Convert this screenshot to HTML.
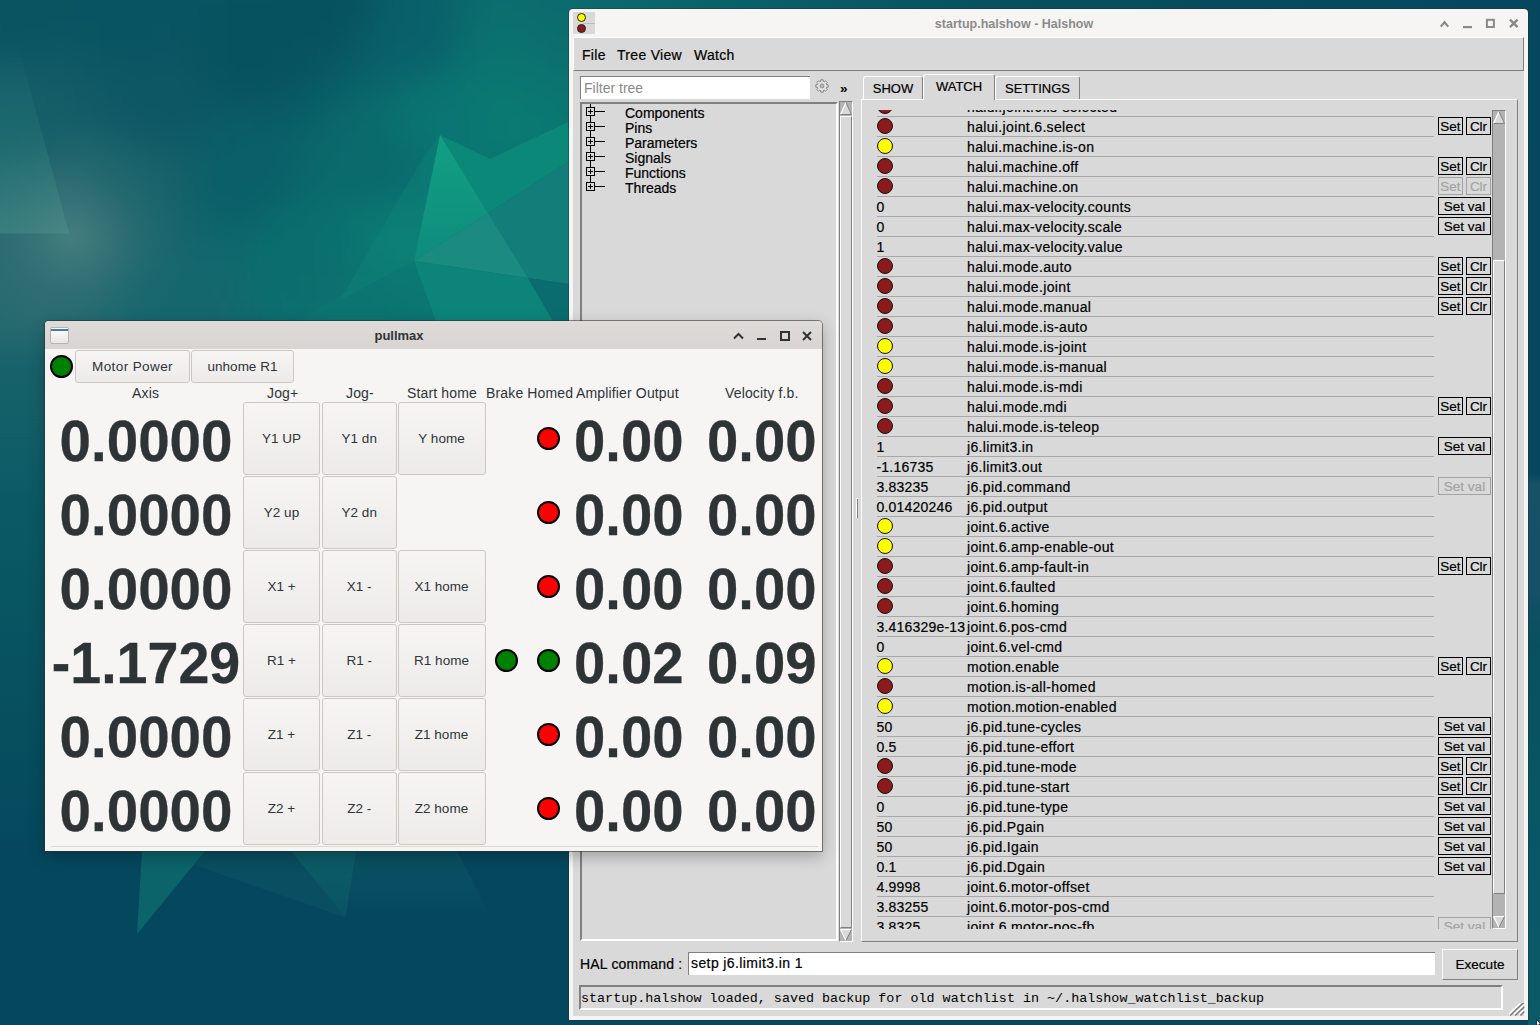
<!DOCTYPE html>
<html><head><meta charset="utf-8">
<style>
*{margin:0;padding:0;box-sizing:border-box}
html,body{width:1540px;height:1025px;overflow:hidden}
body{position:relative;font-family:"Liberation Sans",sans-serif;background:#075463}
.abs{position:absolute}
#bg{position:absolute;left:0;top:0}
/* ---------- halshow ---------- */
#hs{position:absolute;left:569px;top:9px;width:959px;height:1011px;background:#f6f5f4;border-radius:4px 4px 0 0;box-shadow:0 0 0 1px rgba(40,40,40,0.35)}
#hs .title{position:absolute;left:0;top:7.5px;width:890px;text-align:center;font-weight:bold;font-size:12.5px;color:#8b8b8b;padding-left:0}
#hs .ic{position:absolute;left:4px;top:3px;width:22px;height:22px;background:#d9d9d9}
#hs .ic i{position:absolute;left:3.5px;width:9px;height:9px;border-radius:50%;border:1px solid #222}
#hscont{position:absolute;left:4px;top:28px;width:951px;height:979px;background:#d9d9d9}
.menu{position:absolute;top:9px;font-size:14px;letter-spacing:0.3px;color:#000;-webkit-text-stroke:0.2px #000}
#menubar{position:absolute;left:0;top:0;width:951px;height:34px;border-top:1px solid #fff;border-left:1px solid #fff;border-bottom:1px solid #7f7f7f;border-right:1px solid #7f7f7f}
#filter{position:absolute;left:7px;top:39px;width:230px;height:23px;background:#fff;border-top:1px solid #7f7f7f;border-left:1px solid #7f7f7f;font-size:14px;color:#8a8a8a;padding:3px 0 0 3px}
#tree{position:absolute;left:7px;top:65px;width:258px;height:839px;border-top:2px solid #808080;border-left:2px solid #808080;border-bottom:2px solid #fff;border-right:2px solid #fff}
.ti{position:absolute;left:43px;font-size:14px;color:#000;white-space:nowrap;-webkit-text-stroke:0.2px #000}
#tsb{position:absolute;left:266px;top:64px;width:14px;height:841px;background:#b3b3b3;border-left:1px solid #808080;border-top:1px solid #808080;border-right:1px solid #fff;border-bottom:1px solid #fff}
.thumb{position:absolute;left:0;width:12px;background:#d9d9d9;border-left:1px solid #fff;border-top:1px solid #fff;border-right:1px solid #808080;border-bottom:1px solid #808080}
.tab{position:absolute;-webkit-text-stroke:0.2px #000;height:24px;border:1px solid #fff;border-right-color:#808080;border-bottom:none;border-radius:3px 3px 0 0;font-size:13px;color:#000;text-align:center;background:#d9d9d9}
#wf{position:absolute;left:288px;top:62px;width:657px;height:843px;border-top:1px solid #fff;border-left:1px solid #fff;border-right:1px solid #808080;border-bottom:1px solid #808080}
#canvas{position:absolute;left:862px;top:110px;width:630px;height:819px;overflow:hidden}
.sep{position:absolute;left:15px;width:557px;height:1px;background:#a8a8a8}
.led{position:absolute;left:15px;width:16px;height:16px;border-radius:50%;border:1px solid #111}
.led.r{background:#8b1a1a}
.led.y{background:#ffff00}
.val{position:absolute;left:14.5px;font-size:14px;letter-spacing:0.2px;-webkit-text-stroke:0.2px #000;line-height:20px;color:#000;white-space:nowrap}
.nm{position:absolute;left:105px;font-size:14px;letter-spacing:0.35px;-webkit-text-stroke:0.2px #000;line-height:20px;color:#000;white-space:nowrap}
.tb{position:absolute;-webkit-text-stroke:0.2px currentColor;height:18px;border:1px solid #000;font-size:13.5px;line-height:18px;text-align:center;color:#000;background:#d9d9d9;white-space:nowrap}
.tb.dis{border-color:#a3a3a3;color:#a3a3a3}
#wsb{position:absolute;left:1492px;top:110px;width:14px;height:819px;background:#b3b3b3;border-left:1px solid #808080;border-top:1px solid #808080;border-right:1px solid #fff;border-bottom:1px solid #fff}
/* ---------- pullmax ---------- */
#pm{position:absolute;left:45px;top:321px;width:777px;height:530px;background:#f6f5f4;border-radius:4px 4px 0 0;box-shadow:0 0 0 1px rgba(50,45,40,0.55),0 5px 16px rgba(0,0,0,0.28)}
#pm .tbar{position:absolute;left:0;top:0;width:777px;height:28px;background:linear-gradient(#dfdbd8,#d8d4d1);border-radius:4px 4px 0 0}
#pm .title{position:absolute;left:0;top:7px;width:708px;text-align:center;font-weight:bold;font-size:13px;color:#2e3436}
.pb{position:absolute;border:1px solid #cdc7c2;border-radius:3px;background:linear-gradient(#f6f5f4,#edebe9);font-size:13.5px;color:#2e3436;display:flex;align-items:center;justify-content:center;white-space:nowrap}
.hdr{position:absolute;top:63.5px;font-size:14px;letter-spacing:0.15px;color:#2e3436;white-space:nowrap}
.big{position:absolute;font-weight:bold;font-size:58px;line-height:66px;color:#2e3436;white-space:nowrap;-webkit-text-stroke:0.3px #2e3436}
.ax{left:0.5px;width:200px;text-align:center;transform:scaleX(0.975);transform-origin:100px 0}
.amp{left:529px;transform:scaleX(0.97);transform-origin:0 0}
.vel{left:662px;transform:scaleX(0.97);transform-origin:0 0}
.pled{position:absolute;width:23px;height:23px;border-radius:50%;border:2px solid #000}
.pled.red{background:#ff0000}
.pled.green{background:#008000}
</style></head><body>
<svg id="bg" width="1540" height="1025" viewBox="0 0 1540 1025">
  <defs>
    <filter id="blur" x="-10%" y="-10%" width="120%" height="120%" color-interpolation-filters="sRGB"><feGaussianBlur stdDeviation="16"/></filter>
    <linearGradient id="lstrip" x1="0" y1="321" x2="0" y2="851" gradientUnits="userSpaceOnUse">
      <stop offset="0" stop-color="#1f666e"/>
      <stop offset="0.34" stop-color="#0a5a65"/>
      <stop offset="0.72" stop-color="#07505f"/>
      <stop offset="1" stop-color="#05485e"/>
    </linearGradient>
    <radialGradient id="spot" cx="71" cy="238" r="120" gradientUnits="userSpaceOnUse">
      <stop offset="0" stop-color="#5a8e8c" stop-opacity="0.5"/>
      <stop offset="0.5" stop-color="#3f7a7c" stop-opacity="0.25"/>
      <stop offset="1" stop-color="#2a6a70" stop-opacity="0"/>
    </radialGradient>
    <linearGradient id="topstrip" x1="569" y1="0" x2="1540" y2="0" gradientUnits="userSpaceOnUse">
      <stop offset="0" stop-color="#0c6b6e"/>
      <stop offset="0.45" stop-color="#07505f"/>
      <stop offset="1" stop-color="#06465d"/>
    </linearGradient>
    <linearGradient id="rstrip" x1="0" y1="0" x2="0" y2="1025" gradientUnits="userSpaceOnUse">
      <stop offset="0" stop-color="#06475d"/>
      <stop offset="0.462" stop-color="#07475e"/>
      <stop offset="0.472" stop-color="#165266"/>
      <stop offset="0.58" stop-color="#145066"/>
      <stop offset="0.63" stop-color="#08505f"/>
      <stop offset="0.82" stop-color="#095766"/>
      <stop offset="1" stop-color="#0b5a68"/>
    </linearGradient>
    <linearGradient id="lefttri" x1="0" y1="40" x2="0" y2="234" gradientUnits="userSpaceOnUse">
      <stop offset="0" stop-color="#2a8080" stop-opacity="0"/>
      <stop offset="0.5" stop-color="#2f8480" stop-opacity="0.3"/>
      <stop offset="1" stop-color="#44908a" stop-opacity="0.6"/>
    </linearGradient>
    <linearGradient id="brightg" x1="0" y1="135" x2="0" y2="261" gradientUnits="userSpaceOnUse">
      <stop offset="0" stop-color="#12a085"/>
      <stop offset="1" stop-color="#0e8c7c"/>
    </linearGradient>
    <linearGradient id="rfade" x1="0" y1="851" x2="0" y2="917" gradientUnits="userSpaceOnUse">
      <stop offset="0" stop-color="#0a5262"/>
      <stop offset="1" stop-color="#05485e"/>
    </linearGradient>
    <linearGradient id="t3g" x1="0" y1="851" x2="0" y2="917" gradientUnits="userSpaceOnUse">
      <stop offset="0" stop-color="#0b5e68"/>
      <stop offset="1" stop-color="#0a5363"/>
    </linearGradient>
  </defs>
  <rect width="1540" height="1025" fill="#05485e"/>
  <rect x="0" y="300" width="80" height="551" fill="url(#lstrip)"/>
  <g filter="url(#blur)"><rect x="-50" y="-50" width="26" height="26" fill="#0b5563"/><rect x="-25" y="-50" width="26" height="26" fill="#0b5562"/><rect x="0" y="-50" width="26" height="26" fill="#0a5462"/><rect x="25" y="-50" width="26" height="26" fill="#0a5462"/><rect x="50" y="-50" width="26" height="26" fill="#0a5562"/><rect x="75" y="-50" width="26" height="26" fill="#0a5462"/><rect x="100" y="-50" width="26" height="26" fill="#095462"/><rect x="125" y="-50" width="26" height="26" fill="#095462"/><rect x="150" y="-50" width="26" height="26" fill="#095562"/><rect x="175" y="-50" width="26" height="26" fill="#095562"/><rect x="200" y="-50" width="26" height="26" fill="#095561"/><rect x="225" y="-50" width="26" height="26" fill="#085461"/><rect x="250" y="-50" width="26" height="26" fill="#085460"/><rect x="275" y="-50" width="26" height="26" fill="#075360"/><rect x="300" y="-50" width="26" height="26" fill="#075360"/><rect x="325" y="-50" width="26" height="26" fill="#075360"/><rect x="350" y="-50" width="26" height="26" fill="#085661"/><rect x="375" y="-50" width="26" height="26" fill="#085b65"/><rect x="400" y="-50" width="26" height="26" fill="#095f68"/><rect x="425" y="-50" width="26" height="26" fill="#09626a"/><rect x="450" y="-50" width="26" height="26" fill="#0a676c"/><rect x="475" y="-50" width="26" height="26" fill="#0b6b6d"/><rect x="500" y="-50" width="26" height="26" fill="#0c6c6e"/><rect x="525" y="-50" width="26" height="26" fill="#0c6c6e"/><rect x="550" y="-50" width="26" height="26" fill="#0c6b6e"/><rect x="575" y="-50" width="26" height="26" fill="#0c6b6e"/><rect x="600" y="-50" width="26" height="26" fill="#0c6c6e"/><rect x="-50" y="-25" width="26" height="26" fill="#0b5562"/><rect x="-25" y="-25" width="26" height="26" fill="#0a5462"/><rect x="0" y="-25" width="26" height="26" fill="#0a5462"/><rect x="25" y="-25" width="26" height="26" fill="#0a5462"/><rect x="50" y="-25" width="26" height="26" fill="#0a5462"/><rect x="75" y="-25" width="26" height="26" fill="#095462"/><rect x="100" y="-25" width="26" height="26" fill="#095462"/><rect x="125" y="-25" width="26" height="26" fill="#095462"/><rect x="150" y="-25" width="26" height="26" fill="#095462"/><rect x="175" y="-25" width="26" height="26" fill="#095562"/><rect x="200" y="-25" width="26" height="26" fill="#085461"/><rect x="225" y="-25" width="26" height="26" fill="#085360"/><rect x="250" y="-25" width="26" height="26" fill="#075360"/><rect x="275" y="-25" width="26" height="26" fill="#07535f"/><rect x="300" y="-25" width="26" height="26" fill="#07525f"/><rect x="325" y="-25" width="26" height="26" fill="#07525f"/><rect x="350" y="-25" width="26" height="26" fill="#075461"/><rect x="375" y="-25" width="26" height="26" fill="#085c67"/><rect x="400" y="-25" width="26" height="26" fill="#096069"/><rect x="425" y="-25" width="26" height="26" fill="#09626a"/><rect x="450" y="-25" width="26" height="26" fill="#0a676c"/><rect x="475" y="-25" width="26" height="26" fill="#0b6c6e"/><rect x="500" y="-25" width="26" height="26" fill="#0c6c6e"/><rect x="525" y="-25" width="26" height="26" fill="#0c6b6e"/><rect x="550" y="-25" width="26" height="26" fill="#0c6b6e"/><rect x="575" y="-25" width="26" height="26" fill="#0c6b6e"/><rect x="600" y="-25" width="26" height="26" fill="#0c6c6e"/><rect x="-50" y="0" width="26" height="26" fill="#0b5562"/><rect x="-25" y="0" width="26" height="26" fill="#0a5462"/><rect x="0" y="0" width="26" height="26" fill="#0a5462"/><rect x="25" y="0" width="26" height="26" fill="#0a5462"/><rect x="50" y="0" width="26" height="26" fill="#0a5462"/><rect x="75" y="0" width="26" height="26" fill="#095462"/><rect x="100" y="0" width="26" height="26" fill="#095462"/><rect x="125" y="0" width="26" height="26" fill="#095462"/><rect x="150" y="0" width="26" height="26" fill="#095462"/><rect x="175" y="0" width="26" height="26" fill="#095462"/><rect x="200" y="0" width="26" height="26" fill="#085360"/><rect x="225" y="0" width="26" height="26" fill="#07525f"/><rect x="250" y="0" width="26" height="26" fill="#07525f"/><rect x="275" y="0" width="26" height="26" fill="#07525f"/><rect x="300" y="0" width="26" height="26" fill="#07525f"/><rect x="325" y="0" width="26" height="26" fill="#07525f"/><rect x="350" y="0" width="26" height="26" fill="#075561"/><rect x="375" y="0" width="26" height="26" fill="#095f69"/><rect x="400" y="0" width="26" height="26" fill="#09606a"/><rect x="425" y="0" width="26" height="26" fill="#09616a"/><rect x="450" y="0" width="26" height="26" fill="#0a686c"/><rect x="475" y="0" width="26" height="26" fill="#0b6f6f"/><rect x="500" y="0" width="26" height="26" fill="#0b6e6f"/><rect x="525" y="0" width="26" height="26" fill="#0c6b6e"/><rect x="550" y="0" width="26" height="26" fill="#0c6b6e"/><rect x="575" y="0" width="26" height="26" fill="#0c6b6e"/><rect x="600" y="0" width="26" height="26" fill="#0c6c6e"/><rect x="-50" y="25" width="26" height="26" fill="#0c5663"/><rect x="-25" y="25" width="26" height="26" fill="#0b5462"/><rect x="0" y="25" width="26" height="26" fill="#0a5462"/><rect x="25" y="25" width="26" height="26" fill="#0a5462"/><rect x="50" y="25" width="26" height="26" fill="#0b5563"/><rect x="75" y="25" width="26" height="26" fill="#0a5562"/><rect x="100" y="25" width="26" height="26" fill="#095462"/><rect x="125" y="25" width="26" height="26" fill="#095462"/><rect x="150" y="25" width="26" height="26" fill="#0a5563"/><rect x="175" y="25" width="26" height="26" fill="#0a5462"/><rect x="200" y="25" width="26" height="26" fill="#07535f"/><rect x="225" y="25" width="26" height="26" fill="#07525f"/><rect x="250" y="25" width="26" height="26" fill="#07525f"/><rect x="275" y="25" width="26" height="26" fill="#07525f"/><rect x="300" y="25" width="26" height="26" fill="#07525f"/><rect x="325" y="25" width="26" height="26" fill="#07535f"/><rect x="350" y="25" width="26" height="26" fill="#085a65"/><rect x="375" y="25" width="26" height="26" fill="#09606a"/><rect x="400" y="25" width="26" height="26" fill="#09606a"/><rect x="425" y="25" width="26" height="26" fill="#09616a"/><rect x="450" y="25" width="26" height="26" fill="#0a6a6d"/><rect x="475" y="25" width="26" height="26" fill="#0b7170"/><rect x="500" y="25" width="26" height="26" fill="#0b7270"/><rect x="525" y="25" width="26" height="26" fill="#0b706f"/><rect x="550" y="25" width="26" height="26" fill="#0c6c6e"/><rect x="575" y="25" width="26" height="26" fill="#0c6c6e"/><rect x="600" y="25" width="26" height="26" fill="#0c6c6e"/><rect x="-50" y="50" width="26" height="26" fill="#0f5865"/><rect x="-25" y="50" width="26" height="26" fill="#0e5864"/><rect x="0" y="50" width="26" height="26" fill="#0e5864"/><rect x="25" y="50" width="26" height="26" fill="#0f5865"/><rect x="50" y="50" width="26" height="26" fill="#0f5865"/><rect x="75" y="50" width="26" height="26" fill="#0d5764"/><rect x="100" y="50" width="26" height="26" fill="#0c5663"/><rect x="125" y="50" width="26" height="26" fill="#0c5664"/><rect x="150" y="50" width="26" height="26" fill="#0d5664"/><rect x="175" y="50" width="26" height="26" fill="#0b5563"/><rect x="200" y="50" width="26" height="26" fill="#085360"/><rect x="225" y="50" width="26" height="26" fill="#07525f"/><rect x="250" y="50" width="26" height="26" fill="#07525f"/><rect x="275" y="50" width="26" height="26" fill="#07535f"/><rect x="300" y="50" width="26" height="26" fill="#075561"/><rect x="325" y="50" width="26" height="26" fill="#085762"/><rect x="350" y="50" width="26" height="26" fill="#095e67"/><rect x="375" y="50" width="26" height="26" fill="#09606a"/><rect x="400" y="50" width="26" height="26" fill="#09616a"/><rect x="425" y="50" width="26" height="26" fill="#09666c"/><rect x="450" y="50" width="26" height="26" fill="#0a706f"/><rect x="475" y="50" width="26" height="26" fill="#0b7370"/><rect x="500" y="50" width="26" height="26" fill="#0b7270"/><rect x="525" y="50" width="26" height="26" fill="#0b7270"/><rect x="550" y="50" width="26" height="26" fill="#0b7170"/><rect x="575" y="50" width="26" height="26" fill="#0b6f6f"/><rect x="600" y="50" width="26" height="26" fill="#0b6e6f"/><rect x="-50" y="75" width="26" height="26" fill="#135c67"/><rect x="-25" y="75" width="26" height="26" fill="#145d67"/><rect x="0" y="75" width="26" height="26" fill="#155e68"/><rect x="25" y="75" width="26" height="26" fill="#155e68"/><rect x="50" y="75" width="26" height="26" fill="#145d67"/><rect x="75" y="75" width="26" height="26" fill="#105a66"/><rect x="100" y="75" width="26" height="26" fill="#0e5764"/><rect x="125" y="75" width="26" height="26" fill="#0d5664"/><rect x="150" y="75" width="26" height="26" fill="#0d5664"/><rect x="175" y="75" width="26" height="26" fill="#0d5664"/><rect x="200" y="75" width="26" height="26" fill="#0a5562"/><rect x="225" y="75" width="26" height="26" fill="#085360"/><rect x="250" y="75" width="26" height="26" fill="#075360"/><rect x="275" y="75" width="26" height="26" fill="#085561"/><rect x="300" y="75" width="26" height="26" fill="#085963"/><rect x="325" y="75" width="26" height="26" fill="#095e66"/><rect x="350" y="75" width="26" height="26" fill="#09636a"/><rect x="375" y="75" width="26" height="26" fill="#09686c"/><rect x="400" y="75" width="26" height="26" fill="#0a6e6f"/><rect x="425" y="75" width="26" height="26" fill="#0a7371"/><rect x="450" y="75" width="26" height="26" fill="#0a7571"/><rect x="475" y="75" width="26" height="26" fill="#0a7871"/><rect x="500" y="75" width="26" height="26" fill="#0a7871"/><rect x="525" y="75" width="26" height="26" fill="#0b7571"/><rect x="550" y="75" width="26" height="26" fill="#0b7470"/><rect x="575" y="75" width="26" height="26" fill="#0b7270"/><rect x="600" y="75" width="26" height="26" fill="#0b7170"/><rect x="-50" y="100" width="26" height="26" fill="#145d68"/><rect x="-25" y="100" width="26" height="26" fill="#155e68"/><rect x="0" y="100" width="26" height="26" fill="#155e68"/><rect x="25" y="100" width="26" height="26" fill="#155e68"/><rect x="50" y="100" width="26" height="26" fill="#155e68"/><rect x="75" y="100" width="26" height="26" fill="#135c67"/><rect x="100" y="100" width="26" height="26" fill="#0f5865"/><rect x="125" y="100" width="26" height="26" fill="#0d5664"/><rect x="150" y="100" width="26" height="26" fill="#0d5664"/><rect x="175" y="100" width="26" height="26" fill="#0d5764"/><rect x="200" y="100" width="26" height="26" fill="#0b5965"/><rect x="225" y="100" width="26" height="26" fill="#0a5964"/><rect x="250" y="100" width="26" height="26" fill="#095a64"/><rect x="275" y="100" width="26" height="26" fill="#095b65"/><rect x="300" y="100" width="26" height="26" fill="#096067"/><rect x="325" y="100" width="26" height="26" fill="#0a666a"/><rect x="350" y="100" width="26" height="26" fill="#0a6a6c"/><rect x="375" y="100" width="26" height="26" fill="#0a6e6f"/><rect x="400" y="100" width="26" height="26" fill="#0a7472"/><rect x="425" y="100" width="26" height="26" fill="#0a7572"/><rect x="450" y="100" width="26" height="26" fill="#0a7572"/><rect x="475" y="100" width="26" height="26" fill="#0a7a72"/><rect x="500" y="100" width="26" height="26" fill="#0a7a72"/><rect x="525" y="100" width="26" height="26" fill="#0a7972"/><rect x="550" y="100" width="26" height="26" fill="#0a7771"/><rect x="575" y="100" width="26" height="26" fill="#0b7471"/><rect x="600" y="100" width="26" height="26" fill="#0b7370"/><rect x="-50" y="125" width="26" height="26" fill="#165e68"/><rect x="-25" y="125" width="26" height="26" fill="#155e68"/><rect x="0" y="125" width="26" height="26" fill="#155e68"/><rect x="25" y="125" width="26" height="26" fill="#155e68"/><rect x="50" y="125" width="26" height="26" fill="#175f69"/><rect x="75" y="125" width="26" height="26" fill="#18606a"/><rect x="100" y="125" width="26" height="26" fill="#175f69"/><rect x="125" y="125" width="26" height="26" fill="#125b67"/><rect x="150" y="125" width="26" height="26" fill="#0f5965"/><rect x="175" y="125" width="26" height="26" fill="#0e5a66"/><rect x="200" y="125" width="26" height="26" fill="#0b5d67"/><rect x="225" y="125" width="26" height="26" fill="#0a5f68"/><rect x="250" y="125" width="26" height="26" fill="#0a5f68"/><rect x="275" y="125" width="26" height="26" fill="#0a6068"/><rect x="300" y="125" width="26" height="26" fill="#0a656a"/><rect x="325" y="125" width="26" height="26" fill="#0a696c"/><rect x="350" y="125" width="26" height="26" fill="#0a6a6c"/><rect x="375" y="125" width="26" height="26" fill="#0a6b6d"/><rect x="400" y="125" width="26" height="26" fill="#0a7371"/><rect x="425" y="125" width="26" height="26" fill="#0a7572"/><rect x="450" y="125" width="26" height="26" fill="#0a7572"/><rect x="475" y="125" width="26" height="26" fill="#0a7972"/><rect x="500" y="125" width="26" height="26" fill="#0a7a72"/><rect x="525" y="125" width="26" height="26" fill="#0a7972"/><rect x="550" y="125" width="26" height="26" fill="#0a7771"/><rect x="575" y="125" width="26" height="26" fill="#0a7571"/><rect x="600" y="125" width="26" height="26" fill="#0b7470"/><rect x="-50" y="150" width="26" height="26" fill="#186069"/><rect x="-25" y="150" width="26" height="26" fill="#186069"/><rect x="0" y="150" width="26" height="26" fill="#186069"/><rect x="25" y="150" width="26" height="26" fill="#1b616a"/><rect x="50" y="150" width="26" height="26" fill="#1f646c"/><rect x="75" y="150" width="26" height="26" fill="#1c646c"/><rect x="100" y="150" width="26" height="26" fill="#1a636b"/><rect x="125" y="150" width="26" height="26" fill="#1a636b"/><rect x="150" y="150" width="26" height="26" fill="#17606a"/><rect x="175" y="150" width="26" height="26" fill="#105f68"/><rect x="200" y="150" width="26" height="26" fill="#0b5f68"/><rect x="225" y="150" width="26" height="26" fill="#0a5f68"/><rect x="250" y="150" width="26" height="26" fill="#0a5f68"/><rect x="275" y="150" width="26" height="26" fill="#0a6169"/><rect x="300" y="150" width="26" height="26" fill="#0a676b"/><rect x="325" y="150" width="26" height="26" fill="#0a6a6c"/><rect x="350" y="150" width="26" height="26" fill="#0a6a6c"/><rect x="375" y="150" width="26" height="26" fill="#0a6a6c"/><rect x="400" y="150" width="26" height="26" fill="#0a6c6d"/><rect x="425" y="150" width="26" height="26" fill="#0a7371"/><rect x="450" y="150" width="26" height="26" fill="#0a7571"/><rect x="475" y="150" width="26" height="26" fill="#0a7771"/><rect x="500" y="150" width="26" height="26" fill="#0a7872"/><rect x="525" y="150" width="26" height="26" fill="#0a7871"/><rect x="550" y="150" width="26" height="26" fill="#0a7771"/><rect x="575" y="150" width="26" height="26" fill="#0b7571"/><rect x="600" y="150" width="26" height="26" fill="#0b7370"/><rect x="-50" y="175" width="26" height="26" fill="#1c636b"/><rect x="-25" y="175" width="26" height="26" fill="#1e636c"/><rect x="0" y="175" width="26" height="26" fill="#21656d"/><rect x="25" y="175" width="26" height="26" fill="#27686f"/><rect x="50" y="175" width="26" height="26" fill="#2b6a71"/><rect x="75" y="175" width="26" height="26" fill="#24676e"/><rect x="100" y="175" width="26" height="26" fill="#1a636b"/><rect x="125" y="175" width="26" height="26" fill="#1a636b"/><rect x="150" y="175" width="26" height="26" fill="#19636b"/><rect x="175" y="175" width="26" height="26" fill="#116169"/><rect x="200" y="175" width="26" height="26" fill="#0b5f68"/><rect x="225" y="175" width="26" height="26" fill="#0a5f68"/><rect x="250" y="175" width="26" height="26" fill="#0a5f68"/><rect x="275" y="175" width="26" height="26" fill="#0a6369"/><rect x="300" y="175" width="26" height="26" fill="#0a696c"/><rect x="325" y="175" width="26" height="26" fill="#0a6b6d"/><rect x="350" y="175" width="26" height="26" fill="#0a6a6c"/><rect x="375" y="175" width="26" height="26" fill="#0a6a6c"/><rect x="400" y="175" width="26" height="26" fill="#0a6d6e"/><rect x="425" y="175" width="26" height="26" fill="#0a7270"/><rect x="450" y="175" width="26" height="26" fill="#0a7471"/><rect x="475" y="175" width="26" height="26" fill="#0a7571"/><rect x="500" y="175" width="26" height="26" fill="#0a7671"/><rect x="525" y="175" width="26" height="26" fill="#0a7571"/><rect x="550" y="175" width="26" height="26" fill="#0b7571"/><rect x="575" y="175" width="26" height="26" fill="#0b7370"/><rect x="600" y="175" width="26" height="26" fill="#0b7370"/><rect x="-50" y="200" width="26" height="26" fill="#21666d"/><rect x="-25" y="200" width="26" height="26" fill="#24676e"/><rect x="0" y="200" width="26" height="26" fill="#27696f"/><rect x="25" y="200" width="26" height="26" fill="#2c6b71"/><rect x="50" y="200" width="26" height="26" fill="#2f6c72"/><rect x="75" y="200" width="26" height="26" fill="#2f6c72"/><rect x="100" y="200" width="26" height="26" fill="#24676e"/><rect x="125" y="200" width="26" height="26" fill="#1c646c"/><rect x="150" y="200" width="26" height="26" fill="#1a646c"/><rect x="175" y="200" width="26" height="26" fill="#13636a"/><rect x="200" y="200" width="26" height="26" fill="#0c6169"/><rect x="225" y="200" width="26" height="26" fill="#0a6069"/><rect x="250" y="200" width="26" height="26" fill="#0a636a"/><rect x="275" y="200" width="26" height="26" fill="#0a6b6d"/><rect x="300" y="200" width="26" height="26" fill="#0a6d6e"/><rect x="325" y="200" width="26" height="26" fill="#0a6f6e"/><rect x="350" y="200" width="26" height="26" fill="#0b7370"/><rect x="375" y="200" width="26" height="26" fill="#0b7873"/><rect x="400" y="200" width="26" height="26" fill="#0b7973"/><rect x="425" y="200" width="26" height="26" fill="#0b7772"/><rect x="450" y="200" width="26" height="26" fill="#0b7571"/><rect x="475" y="200" width="26" height="26" fill="#0b7471"/><rect x="500" y="200" width="26" height="26" fill="#0b7371"/><rect x="525" y="200" width="26" height="26" fill="#0b7370"/><rect x="550" y="200" width="26" height="26" fill="#0b7270"/><rect x="575" y="200" width="26" height="26" fill="#0b7270"/><rect x="600" y="200" width="26" height="26" fill="#0b7170"/><rect x="-50" y="225" width="26" height="26" fill="#25686f"/><rect x="-25" y="225" width="26" height="26" fill="#27696f"/><rect x="0" y="225" width="26" height="26" fill="#286a70"/><rect x="25" y="225" width="26" height="26" fill="#2c6b71"/><rect x="50" y="225" width="26" height="26" fill="#2f6c72"/><rect x="75" y="225" width="26" height="26" fill="#2f6c72"/><rect x="100" y="225" width="26" height="26" fill="#2b6a71"/><rect x="125" y="225" width="26" height="26" fill="#21676e"/><rect x="150" y="225" width="26" height="26" fill="#19666d"/><rect x="175" y="225" width="26" height="26" fill="#15656d"/><rect x="200" y="225" width="26" height="26" fill="#10656c"/><rect x="225" y="225" width="26" height="26" fill="#0c676b"/><rect x="250" y="225" width="26" height="26" fill="#0a6c6d"/><rect x="275" y="225" width="26" height="26" fill="#0a6e6e"/><rect x="300" y="225" width="26" height="26" fill="#0a6e6e"/><rect x="325" y="225" width="26" height="26" fill="#0a706f"/><rect x="350" y="225" width="26" height="26" fill="#0b7973"/><rect x="375" y="225" width="26" height="26" fill="#0b7b74"/><rect x="400" y="225" width="26" height="26" fill="#0b7b74"/><rect x="425" y="225" width="26" height="26" fill="#0b7973"/><rect x="450" y="225" width="26" height="26" fill="#0b7672"/><rect x="475" y="225" width="26" height="26" fill="#0b7471"/><rect x="500" y="225" width="26" height="26" fill="#0b7270"/><rect x="525" y="225" width="26" height="26" fill="#0c7170"/><rect x="550" y="225" width="26" height="26" fill="#0c7070"/><rect x="575" y="225" width="26" height="26" fill="#0c7070"/><rect x="600" y="225" width="26" height="26" fill="#0c7070"/><rect x="-50" y="250" width="26" height="26" fill="#26696f"/><rect x="-25" y="250" width="26" height="26" fill="#276a70"/><rect x="0" y="250" width="26" height="26" fill="#286a70"/><rect x="25" y="250" width="26" height="26" fill="#296a70"/><rect x="50" y="250" width="26" height="26" fill="#2b6b71"/><rect x="75" y="250" width="26" height="26" fill="#2c6b71"/><rect x="100" y="250" width="26" height="26" fill="#276a70"/><rect x="125" y="250" width="26" height="26" fill="#1c676e"/><rect x="150" y="250" width="26" height="26" fill="#16676e"/><rect x="175" y="250" width="26" height="26" fill="#15676e"/><rect x="200" y="250" width="26" height="26" fill="#14676e"/><rect x="225" y="250" width="26" height="26" fill="#0e696d"/><rect x="250" y="250" width="26" height="26" fill="#0b6d6e"/><rect x="275" y="250" width="26" height="26" fill="#0a6e6e"/><rect x="300" y="250" width="26" height="26" fill="#0a6e6e"/><rect x="325" y="250" width="26" height="26" fill="#0b706f"/><rect x="350" y="250" width="26" height="26" fill="#0b7571"/><rect x="375" y="250" width="26" height="26" fill="#0b7a74"/><rect x="400" y="250" width="26" height="26" fill="#0b7a74"/><rect x="425" y="250" width="26" height="26" fill="#0b7973"/><rect x="450" y="250" width="26" height="26" fill="#0b7672"/><rect x="475" y="250" width="26" height="26" fill="#0b7371"/><rect x="500" y="250" width="26" height="26" fill="#0c7170"/><rect x="525" y="250" width="26" height="26" fill="#0c7070"/><rect x="550" y="250" width="26" height="26" fill="#0c7070"/><rect x="575" y="250" width="26" height="26" fill="#0c7070"/><rect x="600" y="250" width="26" height="26" fill="#0c7070"/><rect x="-50" y="275" width="26" height="26" fill="#276970"/><rect x="-25" y="275" width="26" height="26" fill="#286a70"/><rect x="0" y="275" width="26" height="26" fill="#286a70"/><rect x="25" y="275" width="26" height="26" fill="#286a70"/><rect x="50" y="275" width="26" height="26" fill="#286a70"/><rect x="75" y="275" width="26" height="26" fill="#276970"/><rect x="100" y="275" width="26" height="26" fill="#1f686f"/><rect x="125" y="275" width="26" height="26" fill="#17676e"/><rect x="150" y="275" width="26" height="26" fill="#15676e"/><rect x="175" y="275" width="26" height="26" fill="#15676e"/><rect x="200" y="275" width="26" height="26" fill="#15676e"/><rect x="225" y="275" width="26" height="26" fill="#11696e"/><rect x="250" y="275" width="26" height="26" fill="#0c6d6e"/><rect x="275" y="275" width="26" height="26" fill="#0a6e6e"/><rect x="300" y="275" width="26" height="26" fill="#0b6f6e"/><rect x="325" y="275" width="26" height="26" fill="#0c716f"/><rect x="350" y="275" width="26" height="26" fill="#0c716f"/><rect x="375" y="275" width="26" height="26" fill="#0c7270"/><rect x="400" y="275" width="26" height="26" fill="#0b7672"/><rect x="425" y="275" width="26" height="26" fill="#0b7672"/><rect x="450" y="275" width="26" height="26" fill="#0b7571"/><rect x="475" y="275" width="26" height="26" fill="#0c7270"/><rect x="500" y="275" width="26" height="26" fill="#0c7070"/><rect x="525" y="275" width="26" height="26" fill="#0c7070"/><rect x="550" y="275" width="26" height="26" fill="#0c7070"/><rect x="575" y="275" width="26" height="26" fill="#0c7070"/><rect x="600" y="275" width="26" height="26" fill="#0c7070"/><rect x="-50" y="300" width="26" height="26" fill="#26696f"/><rect x="-25" y="300" width="26" height="26" fill="#286a70"/><rect x="0" y="300" width="26" height="26" fill="#286a70"/><rect x="25" y="300" width="26" height="26" fill="#286a70"/><rect x="50" y="300" width="26" height="26" fill="#276a70"/><rect x="75" y="300" width="26" height="26" fill="#23696f"/><rect x="100" y="300" width="26" height="26" fill="#1b686e"/><rect x="125" y="300" width="26" height="26" fill="#16676e"/><rect x="150" y="300" width="26" height="26" fill="#15676e"/><rect x="175" y="300" width="26" height="26" fill="#15676e"/><rect x="200" y="300" width="26" height="26" fill="#15676e"/><rect x="225" y="300" width="26" height="26" fill="#13686e"/><rect x="250" y="300" width="26" height="26" fill="#0e6c6e"/><rect x="275" y="300" width="26" height="26" fill="#0c6e6e"/><rect x="300" y="300" width="26" height="26" fill="#0c706f"/><rect x="325" y="300" width="26" height="26" fill="#0c716f"/><rect x="350" y="300" width="26" height="26" fill="#0c716f"/><rect x="375" y="300" width="26" height="26" fill="#0c716f"/><rect x="400" y="300" width="26" height="26" fill="#0c7370"/><rect x="425" y="300" width="26" height="26" fill="#0c7471"/><rect x="450" y="300" width="26" height="26" fill="#0c7371"/><rect x="475" y="300" width="26" height="26" fill="#0c7170"/><rect x="500" y="300" width="26" height="26" fill="#0c7070"/><rect x="525" y="300" width="26" height="26" fill="#0c7070"/><rect x="550" y="300" width="26" height="26" fill="#0c7070"/><rect x="575" y="300" width="26" height="26" fill="#0c7070"/><rect x="600" y="300" width="26" height="26" fill="#0c7070"/><rect x="-50" y="325" width="26" height="26" fill="#22676e"/><rect x="-25" y="325" width="26" height="26" fill="#24686f"/><rect x="0" y="325" width="26" height="26" fill="#26696f"/><rect x="25" y="325" width="26" height="26" fill="#25696f"/><rect x="50" y="325" width="26" height="26" fill="#23686f"/><rect x="75" y="325" width="26" height="26" fill="#20676e"/><rect x="100" y="325" width="26" height="26" fill="#1a676e"/><rect x="125" y="325" width="26" height="26" fill="#16676e"/><rect x="150" y="325" width="26" height="26" fill="#15676e"/><rect x="175" y="325" width="26" height="26" fill="#15676e"/><rect x="200" y="325" width="26" height="26" fill="#15676e"/><rect x="225" y="325" width="26" height="26" fill="#13686e"/><rect x="250" y="325" width="26" height="26" fill="#0f6b6e"/><rect x="275" y="325" width="26" height="26" fill="#0d6e6e"/><rect x="300" y="325" width="26" height="26" fill="#0c706f"/><rect x="325" y="325" width="26" height="26" fill="#0c716f"/><rect x="350" y="325" width="26" height="26" fill="#0c716f"/><rect x="375" y="325" width="26" height="26" fill="#0c716f"/><rect x="400" y="325" width="26" height="26" fill="#0c7270"/><rect x="425" y="325" width="26" height="26" fill="#0c7270"/><rect x="450" y="325" width="26" height="26" fill="#0c7270"/><rect x="475" y="325" width="26" height="26" fill="#0c7170"/><rect x="500" y="325" width="26" height="26" fill="#0c7070"/><rect x="525" y="325" width="26" height="26" fill="#0c7070"/><rect x="550" y="325" width="26" height="26" fill="#0c7070"/><rect x="575" y="325" width="26" height="26" fill="#0c7070"/><rect x="600" y="325" width="26" height="26" fill="#0c7070"/><rect x="-50" y="350" width="26" height="26" fill="#1a636c"/><rect x="-25" y="350" width="26" height="26" fill="#18626b"/><rect x="0" y="350" width="26" height="26" fill="#16616b"/><rect x="25" y="350" width="26" height="26" fill="#17616b"/><rect x="50" y="350" width="26" height="26" fill="#19636c"/><rect x="75" y="350" width="26" height="26" fill="#1a646c"/><rect x="100" y="350" width="26" height="26" fill="#19666d"/><rect x="125" y="350" width="26" height="26" fill="#17676e"/><rect x="150" y="350" width="26" height="26" fill="#16676e"/><rect x="175" y="350" width="26" height="26" fill="#15676e"/><rect x="200" y="350" width="26" height="26" fill="#14686e"/><rect x="225" y="350" width="26" height="26" fill="#13696e"/><rect x="250" y="350" width="26" height="26" fill="#106b6e"/><rect x="275" y="350" width="26" height="26" fill="#0d6e6e"/><rect x="300" y="350" width="26" height="26" fill="#0c706f"/><rect x="325" y="350" width="26" height="26" fill="#0c716f"/><rect x="350" y="350" width="26" height="26" fill="#0c716f"/><rect x="375" y="350" width="26" height="26" fill="#0c716f"/><rect x="400" y="350" width="26" height="26" fill="#0c726f"/><rect x="425" y="350" width="26" height="26" fill="#0c7270"/><rect x="450" y="350" width="26" height="26" fill="#0c7170"/><rect x="475" y="350" width="26" height="26" fill="#0c7170"/><rect x="500" y="350" width="26" height="26" fill="#0c7070"/><rect x="525" y="350" width="26" height="26" fill="#0c7070"/><rect x="550" y="350" width="26" height="26" fill="#0c7070"/><rect x="575" y="350" width="26" height="26" fill="#0c7070"/><rect x="600" y="350" width="26" height="26" fill="#0c7070"/><rect x="-50" y="375" width="26" height="26" fill="#16616b"/><rect x="-25" y="375" width="26" height="26" fill="#14606a"/><rect x="0" y="375" width="26" height="26" fill="#14606a"/><rect x="25" y="375" width="26" height="26" fill="#14606a"/><rect x="50" y="375" width="26" height="26" fill="#15616a"/><rect x="75" y="375" width="26" height="26" fill="#17626b"/><rect x="100" y="375" width="26" height="26" fill="#18646c"/><rect x="125" y="375" width="26" height="26" fill="#17666d"/><rect x="150" y="375" width="26" height="26" fill="#16676e"/><rect x="175" y="375" width="26" height="26" fill="#15676e"/><rect x="200" y="375" width="26" height="26" fill="#14686e"/><rect x="225" y="375" width="26" height="26" fill="#12696e"/><rect x="250" y="375" width="26" height="26" fill="#106b6e"/><rect x="275" y="375" width="26" height="26" fill="#0e6d6e"/><rect x="300" y="375" width="26" height="26" fill="#0d6f6f"/><rect x="325" y="375" width="26" height="26" fill="#0c706f"/><rect x="350" y="375" width="26" height="26" fill="#0c716f"/><rect x="375" y="375" width="26" height="26" fill="#0c716f"/><rect x="400" y="375" width="26" height="26" fill="#0c716f"/><rect x="425" y="375" width="26" height="26" fill="#0c7170"/><rect x="450" y="375" width="26" height="26" fill="#0c7170"/><rect x="475" y="375" width="26" height="26" fill="#0c7170"/><rect x="500" y="375" width="26" height="26" fill="#0c7070"/><rect x="525" y="375" width="26" height="26" fill="#0c7070"/><rect x="550" y="375" width="26" height="26" fill="#0c7070"/><rect x="575" y="375" width="26" height="26" fill="#0c7070"/><rect x="600" y="375" width="26" height="26" fill="#0c7070"/></g>
  <polygon points="0,-21 69.2,233.4 0,233.4" fill="url(#lefttri)"/>
  <rect width="1540" height="1025" fill="url(#spot)"/>
  <!-- right polygon cluster -->
  <polygon points="440,135 414,261 330,300 300,321 436,321" fill="#0e8077" opacity="0.22"/>
  <polygon points="440,135 420,163 340,300 414,261" fill="#0f8a7a" opacity="0.3"/>
  <polygon points="440,135 490,159 568,122 569,161 488,213" fill="#0c8878"/>
  <polygon points="440,135 488,213 414,261" fill="url(#brightg)"/>
  <polygon points="488,213 569,161 569,284 528,278" fill="#127d79"/>
  <polygon points="414,261 488,213 528,278" fill="#1b8a80"/>
  <polygon points="414,261 528,278 553,321 436,321" fill="#0d8479"/>
  <polygon points="528,278 569,284 569,321 553,321" fill="#0b6c70"/>
  <rect x="569" y="0" width="971" height="9" fill="url(#topstrip)"/>
  <rect x="1528" y="0" width="12" height="1025" fill="url(#rstrip)"/>
  <!-- bottom region -->
  <rect x="0" y="851" width="569" height="174" fill="#05485e"/>
  <polygon points="160,851 355,851 344,917 200,867" fill="#094f61"/>
  <polygon points="355,851 457,851 489,913 344,917" fill="url(#rfade)"/>
  <polygon points="291,851 356,851 345.5,917" fill="url(#t3g)"/>
  <polygon points="142,851 205,851 137,934" fill="#0b6469"/>
</svg>

<div id="hs">
  <div class="ic"><div style="position:absolute;left:10px;top:10.5px;width:12px;height:1px;background:#bdbdbd"></div><i style="top:1.3px;background:#ffff00"></i><i style="top:12.2px;background:#8b1a1a"></i></div>
  <div class="title">startup.halshow - Halshow</div>
  <svg class="abs" style="left:861px;top:0px" width="95" height="28">
    <path d="M10.8 17.6 L14.5 13.2 L18.2 17.6" fill="none" stroke="#8a8a8a" stroke-width="2.2"/>
    <rect x="33" y="17" width="9" height="2.2" fill="#8a8a8a"/>
    <rect x="56.9" y="10.8" width="7" height="7.2" fill="none" stroke="#8a8a8a" stroke-width="2"/>
    <path d="M80 10.6 L87.6 18.2 M87.6 10.6 L80 18.2" stroke="#8a8a8a" stroke-width="2.4"/>
  </svg>
  <div id="hscont">
    <div id="menubar">
      <div class="menu" style="left:8px">File</div>
      <div class="menu" style="left:43px">Tree View</div>
      <div class="menu" style="left:120px">Watch</div>
    </div>
    <div id="filter">Filter tree</div>
    <svg class="abs" style="left:241px;top:41px" width="16" height="16" viewBox="-8 -8 16 16">
      <path d="M-1.30 -4.52 L-1.20 -6.18 L1.20 -6.18 L1.30 -4.52 L2.28 -4.11 L3.52 -5.22 L5.22 -3.52 L4.11 -2.28 L4.52 -1.30 L6.18 -1.20 L6.18 1.20 L4.52 1.30 L4.11 2.28 L5.22 3.52 L3.52 5.22 L2.28 4.11 L1.30 4.52 L1.20 6.18 L-1.20 6.18 L-1.30 4.52 L-2.28 4.11 L-3.52 5.22 L-5.22 3.52 L-4.11 2.28 L-4.52 1.30 L-6.18 1.20 L-6.18 -1.20 L-4.52 -1.30 L-4.11 -2.28 L-5.22 -3.52 L-3.52 -5.22 L-2.28 -4.11 Z" fill="#e2e2e2" stroke="#7a7a7a" stroke-width="0.9"/><circle r="2.4" fill="#9a9a9a"/><circle r="1.2" fill="#bdbdbd"/>
    </svg>
    <div class="abs" style="left:267px;top:45px;font-size:13.5px;font-weight:bold;line-height:14px">&raquo;</div>
    <div id="tree"><svg width="40" height="110" style="position:absolute;left:0;top:0"><line x1="8.5" y1="-1" x2="8.5" y2="83" stroke="#000" stroke-width="1"/><rect x="4.5" y="3.5" width="8" height="8" fill="#d9d9d9" stroke="#000" stroke-width="1"/><line x1="6" y1="7.5" x2="11" y2="7.5" stroke="#000"/><line x1="8.5" y1="5.0" x2="8.5" y2="10.0" stroke="#000"/><line x1="13" y1="7.5" x2="23" y2="7.5" stroke="#000"/><rect x="4.5" y="18.5" width="8" height="8" fill="#d9d9d9" stroke="#000" stroke-width="1"/><line x1="6" y1="22.5" x2="11" y2="22.5" stroke="#000"/><line x1="8.5" y1="20.0" x2="8.5" y2="25.0" stroke="#000"/><line x1="13" y1="22.5" x2="23" y2="22.5" stroke="#000"/><rect x="4.5" y="33.5" width="8" height="8" fill="#d9d9d9" stroke="#000" stroke-width="1"/><line x1="6" y1="37.5" x2="11" y2="37.5" stroke="#000"/><line x1="8.5" y1="35.0" x2="8.5" y2="40.0" stroke="#000"/><line x1="13" y1="37.5" x2="23" y2="37.5" stroke="#000"/><rect x="4.5" y="48.5" width="8" height="8" fill="#d9d9d9" stroke="#000" stroke-width="1"/><line x1="6" y1="52.5" x2="11" y2="52.5" stroke="#000"/><line x1="8.5" y1="50.0" x2="8.5" y2="55.0" stroke="#000"/><line x1="13" y1="52.5" x2="23" y2="52.5" stroke="#000"/><rect x="4.5" y="63.5" width="8" height="8" fill="#d9d9d9" stroke="#000" stroke-width="1"/><line x1="6" y1="67.5" x2="11" y2="67.5" stroke="#000"/><line x1="8.5" y1="65.0" x2="8.5" y2="70.0" stroke="#000"/><line x1="13" y1="67.5" x2="23" y2="67.5" stroke="#000"/><rect x="4.5" y="78.5" width="8" height="8" fill="#d9d9d9" stroke="#000" stroke-width="1"/><line x1="6" y1="82.5" x2="11" y2="82.5" stroke="#000"/><line x1="8.5" y1="80.0" x2="8.5" y2="85.0" stroke="#000"/><line x1="13" y1="82.5" x2="23" y2="82.5" stroke="#000"/></svg>
<div class="ti" style="top:1px">Components</div>
<div class="ti" style="top:16px">Pins</div>
<div class="ti" style="top:31px">Parameters</div>
<div class="ti" style="top:46px">Signals</div>
<div class="ti" style="top:61px">Functions</div>
<div class="ti" style="top:76px">Threads</div>
    </div>
    <div id="tsb">
      <svg class="abs" style="left:0;top:0" width="12" height="13"><rect width="12" height="13" fill="#b3b3b3"/><path d="M0.5 12 L6 0.5 L11.5 12 Z" fill="#d9d9d9"/><path d="M0.5 12.5 L6 0.5" stroke="#fff" stroke-width="1.2"/><path d="M6 0.5 L11.5 12.5 L0.5 12.5" fill="none" stroke="#808080" stroke-width="1"/></svg>
      <div class="thumb" style="top:14px;height:812px"></div>
      <svg class="abs" style="left:0;top:827px" width="12" height="12"><rect width="12" height="12" fill="#b3b3b3"/><path d="M0.5 0.5 L6 11.5 L11.5 0.5 Z" fill="#d9d9d9"/><path d="M0.5 0.5 L6 11.5 M0.5 0.5 L11.5 0.5" fill="none" stroke="#fff" stroke-width="1.2"/><path d="M6 11.5 L11.5 0.5" stroke="#808080" stroke-width="1"/></svg>
    </div>
    <div class="tab" style="left:290px;top:39px;width:60px;padding-top:4px">SHOW</div>
    <div class="tab" style="left:422px;top:39px;width:85px;padding-top:4px">SETTINGS</div>
    <div id="wf"></div>
    <div class="abs" style="left:283px;top:461px;width:2px;height:20px;border-left:1px solid #fff;border-top:1px solid #fff;background:#808080"></div>
    <div class="tab" style="left:350px;top:37px;width:72px;height:26px;padding-top:4px;border-bottom:none">WATCH</div>
    <div class="abs" style="left:7px;top:919px;font-size:14px;letter-spacing:0.2px;-webkit-text-stroke:0.2px #000">HAL command :</div>
    <div class="abs" style="left:115px;top:915px;width:747px;height:23px;background:#fff;border-top:1px solid #7f7f7f;border-left:1px solid #7f7f7f;font-size:14px;letter-spacing:0.4px;padding:2px 0 0 2px;-webkit-text-stroke:0.2px #000">setp j6.limit3.in 1</div>
    <div class="abs" style="left:869px;top:912px;width:76px;height:31px;border:1px solid #fff;border-right-color:#808080;border-bottom-color:#808080;font-size:13.5px;text-align:center;padding-top:7px;-webkit-text-stroke:0.2px #000">Execute</div>
    <div class="abs" style="left:6px;top:948px;width:924px;height:25px;border-top:2px solid #808080;border-left:2px solid #808080;border-bottom:2px solid #fff;border-right:2px solid #fff;font-family:'Liberation Mono',monospace;font-size:13.4px;line-height:16px;padding:4px 0 0 0;white-space:nowrap;overflow:hidden">startup.halshow loaded, saved backup for old watchlist in ~/.halshow_watchlist_backup</div>
    <svg class="abs" style="left:936px;top:966px" width="16" height="16"><g stroke-linecap="round"><path d="M1.2 11.4 L14.5 -1.2 M6.3 11.4 L14.5 3.6 M11.5 11.4 L14.5 8.4" stroke="#fff" stroke-width="1.6" transform="translate(-0.8,-0.8)"/><path d="M1.2 11.4 L14.5 -1.2 M6.3 11.4 L14.5 3.6 M11.5 11.4 L14.5 8.4" stroke="#7a7a7a" stroke-width="1.5" transform="translate(0.4,0.6)"/></g></svg>
  </div>
</div>
<div id="canvas">
<div class="sep" style="top:6px"></div>
<div class="led r" style="top:-12px"></div>
<div class="nm" style="top:-13px">halui.joint.6.is-selected</div>
<div class="sep" style="top:26px"></div>
<div class="led r" style="top:8px"></div>
<div class="nm" style="top:7px">halui.joint.6.select</div>
<div class="tb" style="left:576px;top:7px;width:25px">Set</div>
<div class="tb" style="left:604px;top:7px;width:25px">Clr</div>
<div class="sep" style="top:46px"></div>
<div class="led y" style="top:28px"></div>
<div class="nm" style="top:27px">halui.machine.is-on</div>
<div class="sep" style="top:66px"></div>
<div class="led r" style="top:48px"></div>
<div class="nm" style="top:47px">halui.machine.off</div>
<div class="tb" style="left:576px;top:47px;width:25px">Set</div>
<div class="tb" style="left:604px;top:47px;width:25px">Clr</div>
<div class="sep" style="top:86px"></div>
<div class="led r" style="top:68px"></div>
<div class="nm" style="top:67px">halui.machine.on</div>
<div class="tb dis" style="left:576px;top:67px;width:25px">Set</div>
<div class="tb dis" style="left:604px;top:67px;width:25px">Clr</div>
<div class="sep" style="top:106px"></div>
<div class="val" style="top:87px">0</div>
<div class="nm" style="top:87px">halui.max-velocity.counts</div>
<div class="tb" style="left:576px;top:87px;width:53px">Set val</div>
<div class="sep" style="top:126px"></div>
<div class="val" style="top:107px">0</div>
<div class="nm" style="top:107px">halui.max-velocity.scale</div>
<div class="tb" style="left:576px;top:107px;width:53px">Set val</div>
<div class="sep" style="top:146px"></div>
<div class="val" style="top:127px">1</div>
<div class="nm" style="top:127px">halui.max-velocity.value</div>
<div class="sep" style="top:166px"></div>
<div class="led r" style="top:148px"></div>
<div class="nm" style="top:147px">halui.mode.auto</div>
<div class="tb" style="left:576px;top:147px;width:25px">Set</div>
<div class="tb" style="left:604px;top:147px;width:25px">Clr</div>
<div class="sep" style="top:186px"></div>
<div class="led r" style="top:168px"></div>
<div class="nm" style="top:167px">halui.mode.joint</div>
<div class="tb" style="left:576px;top:167px;width:25px">Set</div>
<div class="tb" style="left:604px;top:167px;width:25px">Clr</div>
<div class="sep" style="top:206px"></div>
<div class="led r" style="top:188px"></div>
<div class="nm" style="top:187px">halui.mode.manual</div>
<div class="tb" style="left:576px;top:187px;width:25px">Set</div>
<div class="tb" style="left:604px;top:187px;width:25px">Clr</div>
<div class="sep" style="top:226px"></div>
<div class="led r" style="top:208px"></div>
<div class="nm" style="top:207px">halui.mode.is-auto</div>
<div class="sep" style="top:246px"></div>
<div class="led y" style="top:228px"></div>
<div class="nm" style="top:227px">halui.mode.is-joint</div>
<div class="sep" style="top:266px"></div>
<div class="led y" style="top:248px"></div>
<div class="nm" style="top:247px">halui.mode.is-manual</div>
<div class="sep" style="top:286px"></div>
<div class="led r" style="top:268px"></div>
<div class="nm" style="top:267px">halui.mode.is-mdi</div>
<div class="sep" style="top:306px"></div>
<div class="led r" style="top:288px"></div>
<div class="nm" style="top:287px">halui.mode.mdi</div>
<div class="tb" style="left:576px;top:287px;width:25px">Set</div>
<div class="tb" style="left:604px;top:287px;width:25px">Clr</div>
<div class="sep" style="top:326px"></div>
<div class="led r" style="top:308px"></div>
<div class="nm" style="top:307px">halui.mode.is-teleop</div>
<div class="sep" style="top:346px"></div>
<div class="val" style="top:327px">1</div>
<div class="nm" style="top:327px">j6.limit3.in</div>
<div class="tb" style="left:576px;top:327px;width:53px">Set val</div>
<div class="sep" style="top:366px"></div>
<div class="val" style="top:347px">-1.16735</div>
<div class="nm" style="top:347px">j6.limit3.out</div>
<div class="sep" style="top:386px"></div>
<div class="val" style="top:367px">3.83235</div>
<div class="nm" style="top:367px">j6.pid.command</div>
<div class="tb dis" style="left:576px;top:367px;width:53px">Set val</div>
<div class="sep" style="top:406px"></div>
<div class="val" style="top:387px">0.01420246</div>
<div class="nm" style="top:387px">j6.pid.output</div>
<div class="sep" style="top:426px"></div>
<div class="led y" style="top:408px"></div>
<div class="nm" style="top:407px">joint.6.active</div>
<div class="sep" style="top:446px"></div>
<div class="led y" style="top:428px"></div>
<div class="nm" style="top:427px">joint.6.amp-enable-out</div>
<div class="sep" style="top:466px"></div>
<div class="led r" style="top:448px"></div>
<div class="nm" style="top:447px">joint.6.amp-fault-in</div>
<div class="tb" style="left:576px;top:447px;width:25px">Set</div>
<div class="tb" style="left:604px;top:447px;width:25px">Clr</div>
<div class="sep" style="top:486px"></div>
<div class="led r" style="top:468px"></div>
<div class="nm" style="top:467px">joint.6.faulted</div>
<div class="sep" style="top:506px"></div>
<div class="led r" style="top:488px"></div>
<div class="nm" style="top:487px">joint.6.homing</div>
<div class="sep" style="top:526px"></div>
<div class="val" style="top:507px">3.416329e-13</div>
<div class="nm" style="top:507px">joint.6.pos-cmd</div>
<div class="sep" style="top:546px"></div>
<div class="val" style="top:527px">0</div>
<div class="nm" style="top:527px">joint.6.vel-cmd</div>
<div class="sep" style="top:566px"></div>
<div class="led y" style="top:548px"></div>
<div class="nm" style="top:547px">motion.enable</div>
<div class="tb" style="left:576px;top:547px;width:25px">Set</div>
<div class="tb" style="left:604px;top:547px;width:25px">Clr</div>
<div class="sep" style="top:586px"></div>
<div class="led r" style="top:568px"></div>
<div class="nm" style="top:567px">motion.is-all-homed</div>
<div class="sep" style="top:606px"></div>
<div class="led y" style="top:588px"></div>
<div class="nm" style="top:587px">motion.motion-enabled</div>
<div class="sep" style="top:626px"></div>
<div class="val" style="top:607px">50</div>
<div class="nm" style="top:607px">j6.pid.tune-cycles</div>
<div class="tb" style="left:576px;top:607px;width:53px">Set val</div>
<div class="sep" style="top:646px"></div>
<div class="val" style="top:627px">0.5</div>
<div class="nm" style="top:627px">j6.pid.tune-effort</div>
<div class="tb" style="left:576px;top:627px;width:53px">Set val</div>
<div class="sep" style="top:666px"></div>
<div class="led r" style="top:648px"></div>
<div class="nm" style="top:647px">j6.pid.tune-mode</div>
<div class="tb" style="left:576px;top:647px;width:25px">Set</div>
<div class="tb" style="left:604px;top:647px;width:25px">Clr</div>
<div class="sep" style="top:686px"></div>
<div class="led r" style="top:668px"></div>
<div class="nm" style="top:667px">j6.pid.tune-start</div>
<div class="tb" style="left:576px;top:667px;width:25px">Set</div>
<div class="tb" style="left:604px;top:667px;width:25px">Clr</div>
<div class="sep" style="top:706px"></div>
<div class="val" style="top:687px">0</div>
<div class="nm" style="top:687px">j6.pid.tune-type</div>
<div class="tb" style="left:576px;top:687px;width:53px">Set val</div>
<div class="sep" style="top:726px"></div>
<div class="val" style="top:707px">50</div>
<div class="nm" style="top:707px">j6.pid.Pgain</div>
<div class="tb" style="left:576px;top:707px;width:53px">Set val</div>
<div class="sep" style="top:746px"></div>
<div class="val" style="top:727px">50</div>
<div class="nm" style="top:727px">j6.pid.Igain</div>
<div class="tb" style="left:576px;top:727px;width:53px">Set val</div>
<div class="sep" style="top:766px"></div>
<div class="val" style="top:747px">0.1</div>
<div class="nm" style="top:747px">j6.pid.Dgain</div>
<div class="tb" style="left:576px;top:747px;width:53px">Set val</div>
<div class="sep" style="top:786px"></div>
<div class="val" style="top:767px">4.9998</div>
<div class="nm" style="top:767px">joint.6.motor-offset</div>
<div class="sep" style="top:806px"></div>
<div class="val" style="top:787px">3.83255</div>
<div class="nm" style="top:787px">joint.6.motor-pos-cmd</div>
<div class="sep" style="top:826px"></div>
<div class="val" style="top:807px">3.8325</div>
<div class="nm" style="top:807px">joint.6.motor-pos-fb</div>
<div class="tb dis" style="left:576px;top:807px;width:53px">Set val</div>
</div>
<div id="wsb">
      <svg class="abs" style="left:0;top:0" width="12" height="13"><rect width="12" height="13" fill="#b3b3b3"/><path d="M0.5 12 L6 0.5 L11.5 12 Z" fill="#d9d9d9"/><path d="M0.5 12.5 L6 0.5" stroke="#fff" stroke-width="1.2"/><path d="M6 0.5 L11.5 12.5 L0.5 12.5" fill="none" stroke="#808080" stroke-width="1"/></svg>
      <div class="thumb" style="top:149px;height:634px"></div>
      <svg class="abs" style="left:0;top:805px" width="12" height="12"><rect width="12" height="12" fill="#b3b3b3"/><path d="M0.5 0.5 L6 11.5 L11.5 0.5 Z" fill="#d9d9d9"/><path d="M0.5 0.5 L6 11.5 M0.5 0.5 L11.5 0.5" fill="none" stroke="#fff" stroke-width="1.2"/><path d="M6 11.5 L11.5 0.5" stroke="#808080" stroke-width="1"/></svg>
    </div>

<div id="pm">
  <div class="tbar"></div>
  <div class="abs" style="left:6px;top:525px;width:767px;height:1px;background:#dcd8d4"></div>
  <div class="abs" style="left:5px;top:6px;width:19px;height:17px;border:1px solid #b8b4b0;border-radius:2px;background:linear-gradient(#fff,#e8e6e4)"><div style="position:absolute;left:0;top:1px;width:17px;height:2px;background:#4a78b5"></div></div>
  <div class="title">pullmax</div>
  <svg class="abs" style="left:680px;top:6px" width="95" height="22">
    <path d="M9 11.5 L13.5 7 L18 11.5" fill="none" stroke="#2e3436" stroke-width="2"/>
    <rect x="32" y="11" width="9" height="2" fill="#2e3436"/>
    <rect x="56" y="5" width="8" height="8" fill="none" stroke="#2e3436" stroke-width="2"/>
    <path d="M78 5 L86 13 M86 5 L78 13" stroke="#2e3436" stroke-width="2"/>
  </svg>
  <div class="pled green" style="left:5px;top:34px"></div>
  <div class="pb" style="left:30px;top:29px;width:115px;height:33px;letter-spacing:0.4px">Motor Power</div>
  <div class="pb" style="left:146px;top:29px;width:103px;height:33px">unhome R1</div>
  <div class="hdr" style="left:87px">Axis</div>
  <div class="hdr" style="left:222px">Jog+</div>
  <div class="hdr" style="left:301px">Jog-</div>
  <div class="hdr" style="left:362px">Start home</div>
  <div class="hdr" style="left:441px">Brake Homed</div>
  <div class="hdr" style="left:531px">Amplifier Output</div>
  <div class="hdr" style="left:680px">Velocity f.b.</div>
<div class="big ax" style="top:86.7px">0.0000</div>
<div class="pb" style="left:198px;top:81px;width:77px;height:73px">Y1 UP</div>
<div class="pb" style="left:277px;top:81px;width:74.5px;height:73px">Y1 dn</div>
<div class="pb" style="left:352.5px;top:81px;width:88px;height:73px">Y home</div>
<div class="pled red" style="left:492px;top:106px"></div>
<div class="big amp" style="top:86.7px">0.00</div>
<div class="big vel" style="top:86.7px">0.00</div>
<div class="big ax" style="top:160.7px">0.0000</div>
<div class="pb" style="left:198px;top:155px;width:77px;height:73px">Y2 up</div>
<div class="pb" style="left:277px;top:155px;width:74.5px;height:73px">Y2 dn</div>
<div class="pled red" style="left:492px;top:180px"></div>
<div class="big amp" style="top:160.7px">0.00</div>
<div class="big vel" style="top:160.7px">0.00</div>
<div class="big ax" style="top:234.7px">0.0000</div>
<div class="pb" style="left:198px;top:229px;width:77px;height:73px">X1 +</div>
<div class="pb" style="left:277px;top:229px;width:74.5px;height:73px">X1 -</div>
<div class="pb" style="left:352.5px;top:229px;width:88px;height:73px">X1 home</div>
<div class="pled red" style="left:492px;top:254px"></div>
<div class="big amp" style="top:234.7px">0.00</div>
<div class="big vel" style="top:234.7px">0.00</div>
<div class="big ax" style="top:308.7px;transform:scaleX(0.958)">-1.1729</div>
<div class="pb" style="left:198px;top:303px;width:77px;height:73px">R1 +</div>
<div class="pb" style="left:277px;top:303px;width:74.5px;height:73px">R1 -</div>
<div class="pb" style="left:352.5px;top:303px;width:88px;height:73px">R1 home</div>
<div class="pled green" style="left:450px;top:328px"></div>
<div class="pled green" style="left:492px;top:328px"></div>
<div class="big amp" style="top:308.7px">0.02</div>
<div class="big vel" style="top:308.7px">0.09</div>
<div class="big ax" style="top:382.7px">0.0000</div>
<div class="pb" style="left:198px;top:377px;width:77px;height:73px">Z1 +</div>
<div class="pb" style="left:277px;top:377px;width:74.5px;height:73px">Z1 -</div>
<div class="pb" style="left:352.5px;top:377px;width:88px;height:73px">Z1 home</div>
<div class="pled red" style="left:492px;top:402px"></div>
<div class="big amp" style="top:382.7px">0.00</div>
<div class="big vel" style="top:382.7px">0.00</div>
<div class="big ax" style="top:456.7px">0.0000</div>
<div class="pb" style="left:198px;top:451px;width:77px;height:73px">Z2 +</div>
<div class="pb" style="left:277px;top:451px;width:74.5px;height:73px">Z2 -</div>
<div class="pb" style="left:352.5px;top:451px;width:88px;height:73px">Z2 home</div>
<div class="pled red" style="left:492px;top:476px"></div>
<div class="big amp" style="top:456.7px">0.00</div>
<div class="big vel" style="top:456.7px">0.00</div>
</div>
<svg class="abs" style="left:1534px;top:1019px" width="7" height="8"><path d="M2.5 0.8 L6.8 5 L4.8 5.2 L6 8 L4 8 L3 5.8 L2.5 6.5 Z" fill="#fff" stroke="#111" stroke-width="0.8"/></svg>
</body></html>
